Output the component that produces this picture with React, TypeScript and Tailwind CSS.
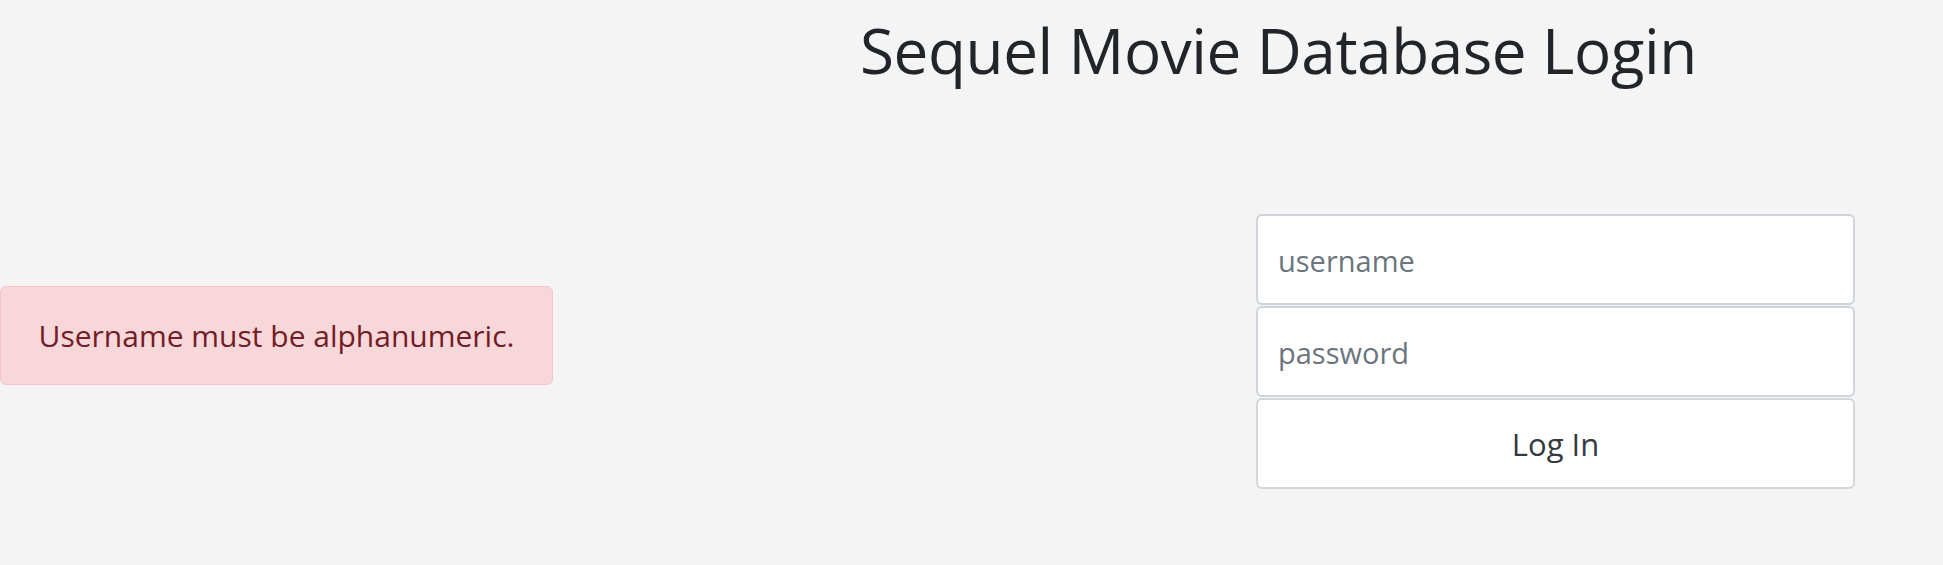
import React from "react";

export default function App() {
  return (
    <div className="w-full h-[565px] bg-[#f4f4f4] overflow-hidden" style={{ fontFamily: '"Open Sans", "Noto Sans", sans-serif' }}>
      <h1 className="pl-[860px] pt-[10px] text-[62px] leading-[80px] font-normal text-[#212529] whitespace-nowrap tracking-[-0.4px]">
        Sequel Movie Database Login
      </h1>
      <div className="flex items-start mt-[124px]">
        <div className="mt-[72px] w-[553px] h-[99px] bg-[#f8d7da] border border-[#f5c6cb] rounded-[6px] text-[#721c24] text-[30px] flex items-center justify-center">
          Username must be alphanumeric.
        </div>
        <div className="ml-[703px] w-[599px] flex flex-col gap-[1px]">
          <input
            placeholder="username"
            className="h-[91px] bg-white border-2 border-[#ced4da] rounded-[6px] px-[20px] pt-[2px] text-[29px] text-[#495057] placeholder:text-[#6c757d] outline-none"
          />
          <input
            type="password"
            placeholder="password"
            className="h-[91px] bg-white border-2 border-[#ced4da] rounded-[6px] px-[20px] pt-[2px] text-[29px] text-[#495057] placeholder:text-[#6c757d] outline-none"
          />
          <button className="h-[91px] bg-white border-2 border-[#d3d7dc] rounded-[6px] pt-[2px] text-[31px] text-[#343a40]">
            Log In
          </button>
        </div>
      </div>
    </div>
  );
}
